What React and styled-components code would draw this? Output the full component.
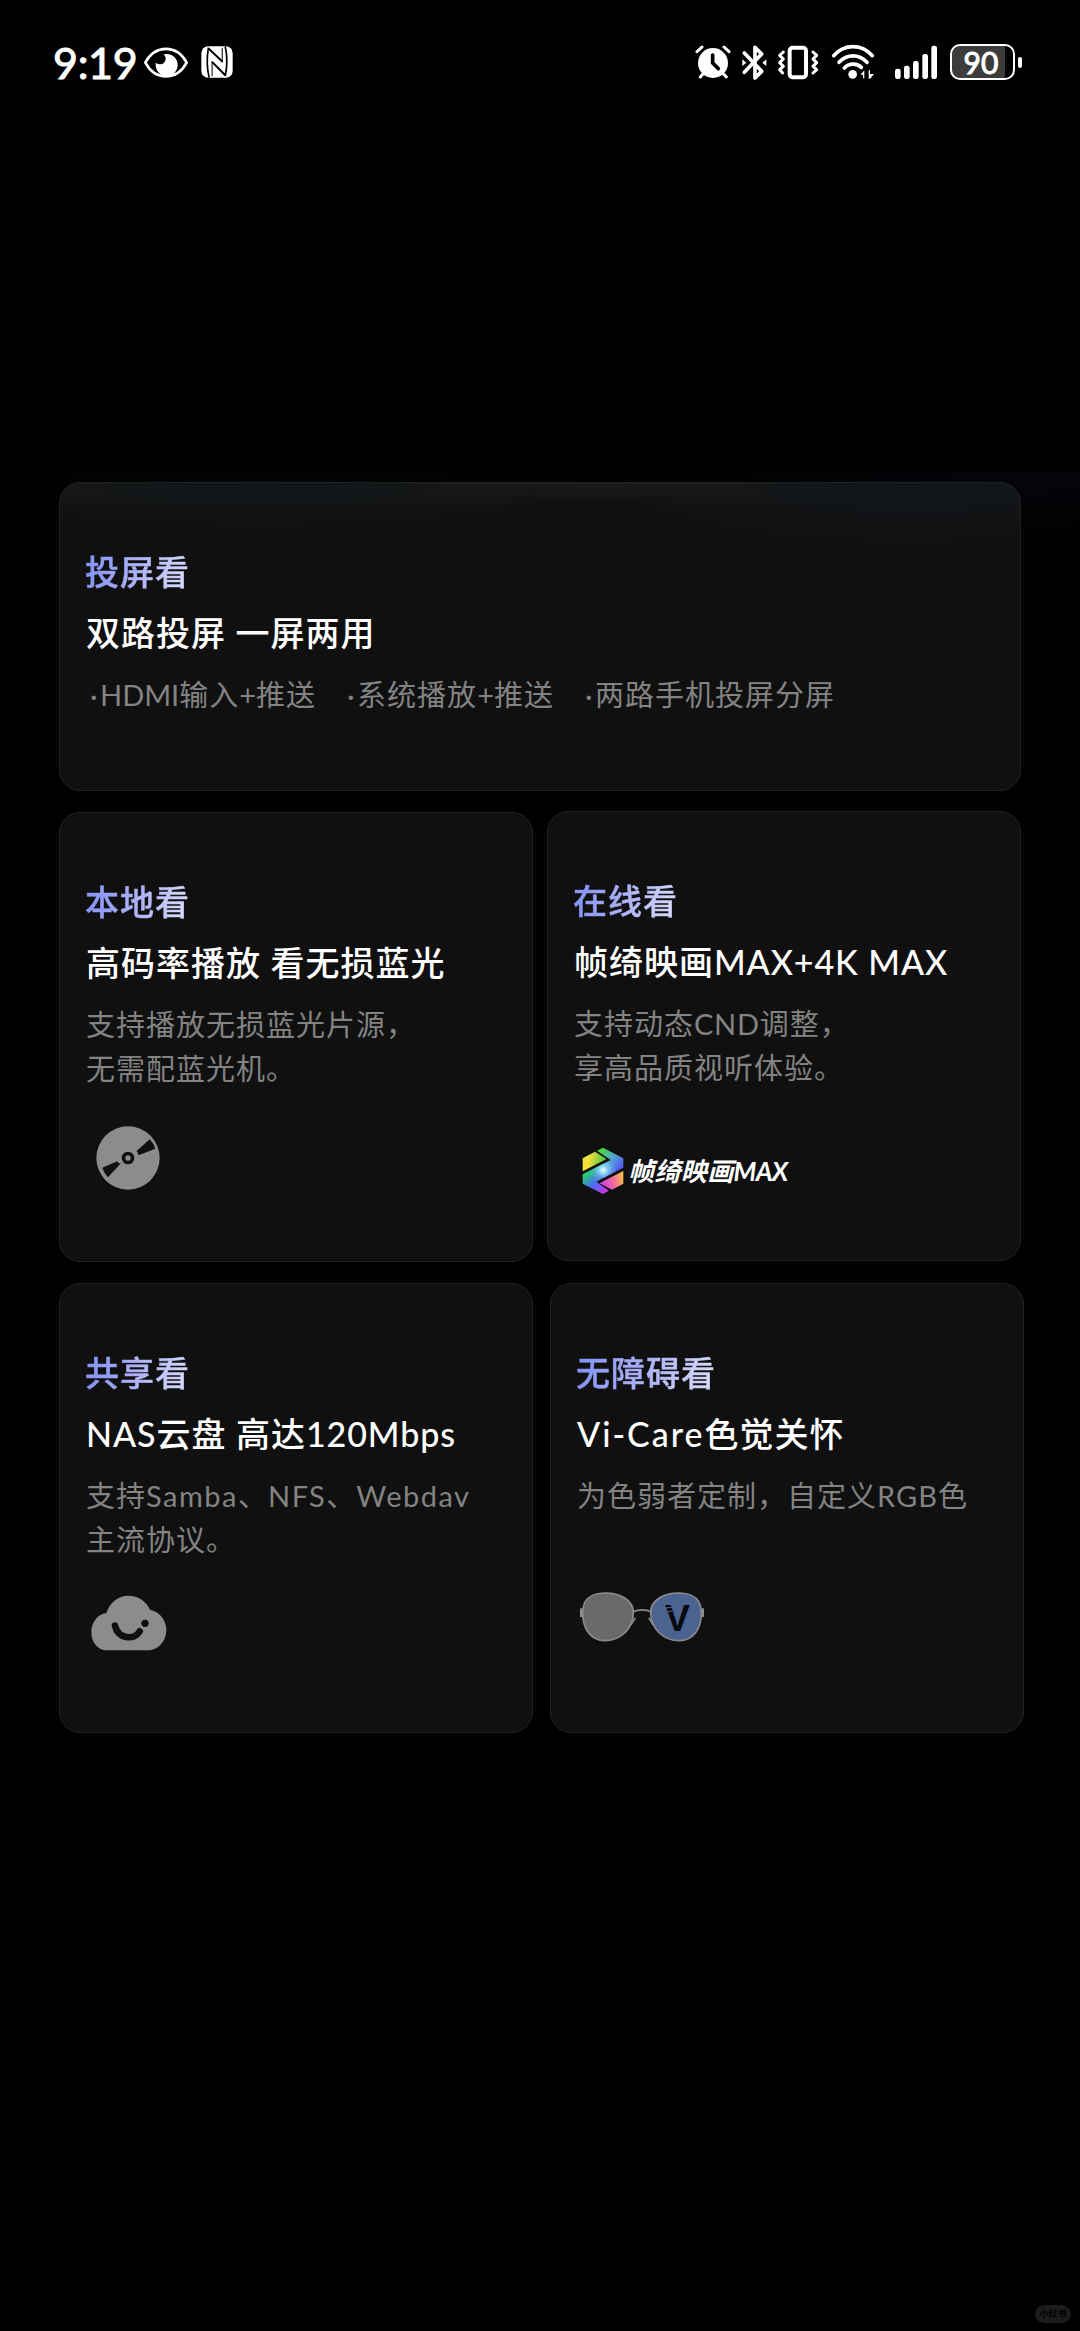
import React from 'react';
import styled, { createGlobalStyle } from 'styled-components';

// track: letter spacing of the latin runs in the title and in the description
const cards = {
    cast: {
        tag: '投屏看',
        title: '双路投屏 一屏两用',
        points: ['HDMI输入+推送', '系统播放+推送', '两路手机投屏分屏'],
        track: [1, 0],
    },
    local: {
        tag: '本地看',
        title: '高码率播放 看无损蓝光',
        lines: ['支持播放无损蓝光片源，', '无需配蓝光机。'],
        track: [1, 1],
    },
    online: {
        tag: '在线看',
        title: '帧绮映画MAX+4K MAX',
        lines: ['支持动态CND调整，', '享高品质视听体验。'],
        track: [0.9, 0.7],
    },
    share: {
        tag: '共享看',
        title: 'NAS云盘 高达120Mbps',
        lines: ['支持Samba、NFS、Webdav', '主流协议。'],
        track: [0.9, 1.5],
    },
    care: {
        tag: '无障碍看',
        title: 'Vi-Care色觉关怀',
        lines: ['为色弱者定制，自定义RGB色'],
        track: [2, 1],
    },
};

const EyeIcon = () => (
    <svg width="46" height="33" viewBox="310 46 138 99" fill="none">
        <circle cx="381" cy="103" r="33" fill="#fff" />
        <circle cx="361" cy="84" r="17" fill="#000" />
        <path d="M317 96C347 41 411 41 441 96C411 151 347 151 317 96Z" stroke="#fff" strokeWidth="8" strokeLinejoin="round" />
    </svg>
);

const NfcIcon = () => (
    <svg width="32" height="32" viewBox="486 47 95 95" fill="none">
        <rect x="487" y="48" width="93" height="93" rx="20" fill="#fff" />
        <path d="M508 52C503 80 503 110 510 141" stroke="#000" strokeWidth="5" />
        <path d="M558 48C564 76 564 108 558 136" stroke="#000" strokeWidth="5" />
        <path d="M508 54L550 94M519 94L558 134" stroke="#000" strokeWidth="6" />
        <path d="M519 92V137M549 52V96" stroke="#000" strokeWidth="3" />
    </svg>
);

const AlarmIcon = () => (
    <svg width="36" height="34" viewBox="44 44 108 102" fill="none" strokeLinecap="round">
        <circle cx="98" cy="98" r="45" fill="#fff" />
        <path d="M50 64L65 50M131 50L146 64" stroke="#fff" strokeWidth="9" />
        <path d="M70 128L60 140M127 128L138 140" stroke="#fff" strokeWidth="9" />
        <path d="M97 74V98L114 115" stroke="#000" strokeWidth="11" strokeLinejoin="round" />
    </svg>
);

const BluetoothIcon = () => (
    <svg width="25" height="35" viewBox="188 43 75 105" fill="none">
        <path d="M195 67L247 122L227 142V50L247 70L195 125" stroke="#fff" strokeWidth="11" strokeLinecap="round" strokeLinejoin="round" />
        <path d="M189 86L201 96L189 106ZM261 86L249 96L261 106Z" fill="#fff" />
    </svg>
);

const VibrateIcon = () => (
    <svg width="42" height="35" viewBox="292 43 126 105" fill="none" stroke="#fff" strokeLinecap="round" strokeLinejoin="round">
        <rect x="330" y="51" width="49" height="89" rx="9" strokeWidth="12" />
        <path d="M311 64L300 74L311 85L300 96L311 107L300 117L309 127" strokeWidth="9" />
        <path d="M400 127L411 117L400 107L411 96L400 85L411 74L400 64" strokeWidth="9" />
    </svg>
);

const WifiIcon = () => (
    <svg width="44" height="36" viewBox="454 42 132 108" fill="none" strokeLinecap="round">
        <path d="M462 77C494 41 546 41 578 77" stroke="#fff" strokeWidth="11" />
        <path d="M478 97C502 71 538 71 562 97" stroke="#fff" strokeWidth="11" />
        <path d="M494 114C508 99 532 99 545 112" stroke="#fff" strokeWidth="11" />
        <circle cx="519" cy="133" r="13" fill="#fff" />
        <path d="M542 134L554 121V145H550V134ZM567 121H571V132H583L571 146H567Z" fill="#fff" />
    </svg>
);

const SignalIcon = () => (
    <svg width="42" height="35" viewBox="645 43 126 105" fill="#fff">
        <rect x="645" y="114" width="17" height="31" rx="7" />
        <rect x="672" y="105" width="17" height="40" rx="7" />
        <rect x="699" y="91" width="17" height="54" rx="7" />
        <rect x="727" y="70" width="17" height="75" rx="7" />
        <rect x="754" y="45" width="17" height="100" rx="7" />
    </svg>
);

const DiscIcon = () => (
    <svg width="64" height="64" viewBox="142 977 192 192">
        <circle cx="238" cy="1073" r="95" fill="#8d8b8d" />
        <circle cx="238" cy="1073" r="13.5" fill="none" stroke="#101010" strokeWidth="11" />
        <path d="M264 1052L303 1017Q315 1029 320 1045L270 1065Q268 1057 264 1052Z" fill="#101010" />
        <path d="M212 1094L178 1131Q166 1119 161 1102L206 1083Q208 1090 216 1090Z" fill="#101010" />
    </svg>
);

const CloudIcon = () => (
    <svg width="76" height="56" viewBox="35 43 228 168">
        <path d="M82 209C56 209 36 186 36 155C36 124 56 100 81 97C91 66 117 45 146 45C177 45 203 63 212 88C240 92 261 118 261 148C261 182 236 209 204 209Z" fill="#8d8b8d" />
        <path d="M107 135C116 174 164 181 181 152" fill="none" stroke="#101010" strokeWidth="20" strokeLinecap="round" />
        <circle cx="197" cy="128" r="11" fill="#101010" />
    </svg>
);

const GlassesIcon = () => (
    <svg width="126" height="52" viewBox="27 32 378 156">
        <g stroke="#8b8b8b" strokeWidth="5" strokeLinecap="round">
            <path d="M104 38C148 37 189 58 190 96C190 146 151 181 104 181C62 181 38 146 38 98C38 56 60 39 104 38Z" fill="#6a696b" />
            <path d="M328 38C284 37 243 58 242 96C242 146 281 181 328 181C370 181 394 146 394 98C394 56 372 39 328 38Z" fill="#4a6391" />
            <path d="M190 94C204 87 229 87 243 94M195 114L184 131M237 114L248 131" fill="none" />
        </g>
        <path d="M30 84H37V110H30ZM395 84H402V110H395Z" fill="#8b8b8b" />
        <text x="285" y="152" fontFamily="Liberation Sans, Arial, sans-serif" fontSize="112" fontWeight="700" fill="#07090d">V</text>
        <path d="M284 84L312 79M288 96L314 90" stroke="#4a6391" strokeWidth="3" />
    </svg>
);

const HexLogo = () => (
    <svg width="42" height="48" viewBox="38 52 126 144">
        <defs>
            <linearGradient id="hexYellow" x1="0" y1="0.3" x2="1" y2="0.4">
                <stop offset="0.25" stopColor="#f3e13c" />
                <stop offset="1" stopColor="#43c13c" />
            </linearGradient>
            <linearGradient id="hexUpper" gradientUnits="userSpaceOnUse" x1="95" y1="60" x2="155" y2="110">
                <stop offset="0" stopColor="#45dc37" />
                <stop offset="0.55" stopColor="#53a5d2" />
                <stop offset="1" stopColor="#525df0" />
            </linearGradient>
            <linearGradient id="hexLower" gradientUnits="userSpaceOnUse" x1="48" y1="128" x2="103" y2="192">
                <stop offset="0" stopColor="#23de62" />
                <stop offset="0.5" stopColor="#4770ee" />
                <stop offset="0.75" stopColor="#8550f0" />
                <stop offset="1" stopColor="#c936dc" />
            </linearGradient>
            <linearGradient id="hexPink" x1="0" y1="0.6" x2="1" y2="0.4">
                <stop offset="0.1" stopColor="#c944dc" />
                <stop offset="0.6" stopColor="#f66c9b" />
                <stop offset="1" stopColor="#f7bd4a" />
            </linearGradient>
            <radialGradient id="hexShine" gradientUnits="userSpaceOnUse" cx="102" cy="121" r="40">
                <stop offset="0" stopColor="#f1ffff" />
                <stop offset="0.35" stopColor="#8edcf8" stopOpacity="0.8" />
                <stop offset="1" stopColor="#5a9bf5" stopOpacity="0" />
            </radialGradient>
        </defs>
        <path d="M40 86L77 66L112 88L40 125Z" fill="url(#hexYellow)" />
        <path d="M101 54L162 86V114L101 145L60 124L124 91L83 63Z" fill="url(#hexUpper)" />
        <path d="M40 134L101 103L124 126L82 157L119 183L101 193L40 162Z" fill="url(#hexLower)" />
        <path d="M124 91L162 86V114L80 157L40 162V134Z" fill="url(#hexShine)" />
        <path d="M162 124V162L128 180L90 161Z" fill="url(#hexPink)" />
    </svg>
);

const Mixed = ({ text, track }) => (
    text.split(/([A-Za-z0-9+-]+)/).map((part, index) => (
        index % 2 ? <Latin key={index} $track={track}>{part}</Latin> : part
    ))
);

const FeatureCard = ({ data, width, height, drop, children }) => (
    <Card $width={width} $height={height} $drop={drop} $lit={!!data.points}>
        <Tag>{data.tag}</Tag>
        <Title><Mixed text={data.title} track={data.track[0]} /></Title>
        {data.points ? (
            <Points>
                {data.points.map((point) => (
                    <Point key={point}>
                        <i>·</i>
                        <Mixed text={point} track={data.track[1]} />
                    </Point>
                ))}
            </Points>
        ) : (
            <Desc>
                {data.lines.map((line) => (
                    <p key={line}><Mixed text={line} track={data.track[1]} /></p>
                ))}
            </Desc>
        )}
        {children}
    </Card>
);

const App = () => (
    <Screen>
        <GlobalStyle />
        <StatusBar>
            <Time>9:19</Time>
            <EyeIcon />
            <NfcIcon />
            <StatusRight>
                <AlarmIcon />
                <BluetoothIcon />
                <VibrateIcon />
                <WifiIcon />
                <SignalIcon />
                <Battery>
                    <BatteryBody>90</BatteryBody>
                    <BatteryTip />
                </Battery>
            </StatusRight>
        </StatusBar>

        <Panel>
            <Row>
                <FeatureCard data={cards.cast} width={962} height={309} />
            </Row>
            <Row $top={20} $gap={14}>
                <FeatureCard data={cards.local} width={474} height={450} drop={1}>
                    <Art $top={34} $left={11}><DiscIcon /></Art>
                </FeatureCard>
                <FeatureCard data={cards.online} width={474} height={450}>
                    <Art $top={56} $left={9}>
                        <HexLogo />
                        <Brand>帧绮映画<em>MAX</em></Brand>
                    </Art>
                </FeatureCard>
            </Row>
            <Row $top={21} $gap={17}>
                <FeatureCard data={cards.share} width={474} height={450}>
                    <Art $top={32} $left={6}><CloudIcon /></Art>
                </FeatureCard>
                <FeatureCard data={cards.care} width={474} height={450}>
                    <Art $top={28} $left={3}><GlassesIcon /></Art>
                </FeatureCard>
            </Row>
        </Panel>

        <Footer>
            <Watermark>小红书</Watermark>
        </Footer>
    </Screen>
);

const GlobalStyle = createGlobalStyle`
    * {
        box-sizing: border-box;
        margin: 0;
        padding: 0;
    }

    body {
        background: #000;
        font-family: Lato, 'Noto Sans CJK SC', sans-serif;
    }

    svg {
        display: block;
        flex-shrink: 0;
    }
`

const Screen = styled.div`
    display: flex;
    flex-direction: column;
    width: 1080px;
    height: 2331px;
    overflow: hidden;
    background: #000;
    color: #fff;
`

const StatusBar = styled.header`
    display: flex;
    align-items: center;
    height: 124px;
    margin-bottom: 349px;
    padding: 0 58px 0 53px;

    svg + svg {
        margin-left: 12px;
    }
`

const Time = styled.span`
    width: 90px;
    font-size: 43px;
    font-weight: 400;
    letter-spacing: -0.3px;
    -webkit-text-stroke: 1px #fff;
    white-space: nowrap;
`

const StatusRight = styled.div`
    display: flex;
    align-items: center;
    margin-left: auto;

    svg + svg {
        margin-left: 11px;
    }

    svg:nth-of-type(3) {
        margin-left: 10px;
    }

    svg:nth-of-type(4) {
        margin-left: 12px;
    }

    svg:nth-of-type(5) {
        margin-left: 20px;
    }
`

const Battery = styled.div`
    display: flex;
    align-items: center;
    gap: 3px;
    margin-left: 13px;
`

const BatteryBody = styled.div`
    display: flex;
    align-items: center;
    justify-content: center;
    width: 65px;
    height: 36px;
    padding-right: 3px;
    border: 2.5px solid #fff;
    border-radius: 10px;
    background: linear-gradient(90deg, #3c3c3c 53px, #000 53px);
    font-size: 30px;
    font-weight: 400;
    -webkit-text-stroke: 1px #fff;
    line-height: 30px;
`

const BatteryTip = styled.div`
    width: 4px;
    height: 11px;
    border-radius: 2px;
    background: #fff;
`

const Panel = styled.main`
    display: flex;
    flex-direction: column;
    padding: 9px 0 0 59px;
    background:
        radial-gradient(ellipse 420px 75px at 1020px 0, #04060a, transparent),
        radial-gradient(ellipse 420px 40px at 260px 0, #030405, transparent);
`

const Row = styled.section`
    display: flex;
    gap: ${({ $gap = 0 }) => $gap}px;
    margin-top: ${({ $top = 0 }) => $top}px;
`

const Card = styled.article`
    width: ${({ $width }) => $width}px;
    height: ${({ $height }) => $height}px;
    margin-top: ${({ $drop = 0 }) => $drop}px;
    padding: 59px 0 0 25px;
    border: 1px solid #212222;
    border-radius: 21px;
    background: ${({ $lit }) => $lit
        ? 'radial-gradient(ellipse 300px 58px at 850px 8px, #12161a, transparent), radial-gradient(ellipse 330px 44px at 200px 4px, #121619, transparent), linear-gradient(#191a1a, #101010 24px)'
        : '#101010'};
`

const Tag = styled.h3`
    width: max-content;
    background: linear-gradient(100deg, #7f8ff5, #aeb2f8 50%, #dcdffb);
    background-clip: text;
    -webkit-text-stroke: 0.5px transparent;
    color: transparent;
    font-size: 34px;
    font-weight: 500;
    letter-spacing: 1px;
    line-height: 60px;
    white-space: nowrap;
`

const Title = styled.h2`
    padding-left: 1px;
    font-size: 34px;
    font-weight: 500;
    letter-spacing: 1px;
    line-height: 62px;
    white-space: nowrap;
`

const Latin = styled.span`
    letter-spacing: ${({ $track }) => $track}px;
`

const Desc = styled.div`
    height: 89px;
    margin-top: 9px;
    padding-left: 1px;
    color: #838383;
    font-size: 29px;
    letter-spacing: 1px;
    line-height: 44px;
    white-space: nowrap;
`

const Points = styled(Desc)`
    display: flex;
    gap: 31px;
    padding-left: 5px;
`

const Point = styled.span`
    display: flex;

    i {
        width: 10px;
        font-style: normal;
    }
`

const Art = styled.div`
    display: flex;
    align-items: center;
    margin-top: ${({ $top }) => $top}px;
    margin-left: ${({ $left }) => $left}px;
`

const Brand = styled.span`
    margin-left: 4px;
    font-size: 26px;
    font-style: italic;
    font-weight: 700;
    letter-spacing: 0.4px;
    line-height: 30px;
    white-space: nowrap;

    em {
        letter-spacing: -0.8px;
    }
`

const Footer = styled.footer`
    display: flex;
    justify-content: flex-end;
    margin-top: auto;
    padding: 0 9px 8px 0;
`

const Watermark = styled.span`
    width: 36px;
    height: 18px;
    border-radius: 9px;
    background: #1c1c1c;
    color: #000;
    font-size: 9px;
    font-weight: 700;
    line-height: 18px;
    text-align: center;
`

export default App;
